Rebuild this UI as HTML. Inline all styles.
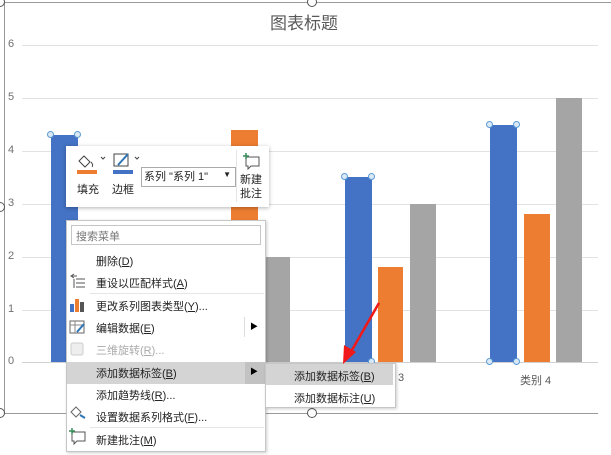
<!DOCTYPE html>
<html><head><meta charset="utf-8"><style>
*{margin:0;padding:0;box-sizing:border-box}
body{width:611px;height:455px;background:#fff;position:relative;overflow:hidden;font-family:"Liberation Sans","Noto Sans CJK SC",sans-serif}
.a{position:absolute}
.g{position:absolute;left:22px;width:576px;height:1px;background:#e2e2e2}
.yl{position:absolute;left:8px;font-size:11px;color:#707070}
.b{position:absolute;background:#4472c4}.o{position:absolute;background:#ed7d31}.y{position:absolute;background:#a5a5a5}
.h{position:absolute;width:7px;height:7px;border:1px solid #5b9bd5;background:#dbe9f7;border-radius:50%}
.H{position:absolute;width:10px;height:10px;border:1.5px solid #555;background:#fff;border-radius:50%}
.mi{position:absolute;left:96px;font-size:11px;color:#222;line-height:14px}
.sep{position:absolute;left:90px;width:174px;height:1px;background:#e6e6e6}
</style></head><body>
<div class="a" style="left:0;top:2px;width:611px;height:1px;background:#999"></div>
<div class="a" style="left:4px;top:2px;width:1px;height:412px;background:#999"></div>
<div class="a" style="left:0;top:413px;width:598px;height:1px;background:#999"></div>
<div class="a" style="left:270px;top:9px;font-size:17px;color:#595959">图表标题</div>
<div class="g" style="top:45px"></div><div class="g" style="top:98px"></div><div class="g" style="top:151px"></div><div class="g" style="top:204px"></div><div class="g" style="top:257px"></div><div class="g" style="top:310px"></div><div class="g" style="top:362px;background:#d0d0d0"></div>
<div class="yl" style="top:38px">6</div><div class="yl" style="top:91px">5</div><div class="yl" style="top:144px">4</div><div class="yl" style="top:197px">3</div><div class="yl" style="top:250px">2</div><div class="yl" style="top:303px">1</div><div class="yl" style="top:355px">0</div>
<div class="b" style="left:51px;top:135px;width:27px;height:227px"></div>
<div class="o" style="left:231px;top:130px;width:27px;height:232px"></div>
<div class="y" style="left:265px;top:257px;width:25px;height:105px"></div>
<div class="b" style="left:345px;top:177px;width:27px;height:185px"></div>
<div class="o" style="left:378px;top:267px;width:25px;height:95px"></div>
<div class="y" style="left:410px;top:204px;width:26px;height:158px"></div>
<div class="b" style="left:490px;top:125px;width:27px;height:237px"></div>
<div class="o" style="left:524px;top:214px;width:26px;height:148px"></div>
<div class="y" style="left:556px;top:98px;width:26px;height:264px"></div>
<div class="h" style="left:47px;top:131px"></div><div class="h" style="left:74px;top:131px"></div>
<div class="h" style="left:341px;top:173px"></div><div class="h" style="left:368px;top:173px"></div><div class="h" style="left:368px;top:358px"></div>
<div class="h" style="left:486px;top:121px"></div><div class="h" style="left:513px;top:121px"></div><div class="h" style="left:486px;top:358px"></div><div class="h" style="left:513px;top:358px"></div>
<div class="a" style="left:398px;top:372px;font-size:11px;color:#595959">3</div>
<div class="a" style="left:520px;top:372px;font-size:11px;color:#595959">类别 4</div>
<div class="H" style="left:-5px;top:-3px"></div><div class="H" style="left:307px;top:-3px"></div><div class="H" style="left:-5px;top:202px"></div><div class="H" style="left:-5px;top:408px"></div><div class="H" style="left:307px;top:408px"></div>
<!-- mini toolbar -->
<div class="a" style="left:66px;top:146px;width:203px;height:61px;background:#fff;box-shadow:0 1px 4px rgba(0,0,0,.3)"></div>
<svg class="a" style="left:76px;top:152px" width="66" height="26"><path d="M8 4l6 6-5 5-6-6z" fill="none" stroke="#444"/><path d="M15 10c2 2 2 4 1 5" stroke="#444" fill="none"/><rect x="1" y="18" width="20" height="4" fill="#ed7d31"/><path d="M25 5l2 2 2-2" stroke="#444" fill="none"/><rect x="38" y="2" width="14" height="12" fill="none" stroke="#444"/><path d="M42 13l10-11" stroke="#2e75b6" stroke-width="2"/><rect x="37" y="18" width="20" height="4" fill="#4472c4"/><path d="M59 5l2 2 2-2" stroke="#444" fill="none"/></svg>
<div class="a" style="left:77px;top:181px;font-size:11px;color:#222">填充</div>
<div class="a" style="left:112px;top:181px;font-size:11px;color:#222">边框</div>
<div class="a" style="left:141px;top:167px;width:95px;height:20px;border:1px solid #aaa;font-size:11px;color:#222;padding:2px 2px;line-height:14px">系列 "系列 1"<span style="position:absolute;right:4px;top:0;font-size:8px">▼</span></div>
<div class="a" style="left:236px;top:150px;width:1px;height:52px;background:#e6e6e6"></div>
<svg class="a" style="left:242px;top:153px" width="20" height="18"><path d="M4 4h13v9H9l-3 3v-3H4z" fill="none" stroke="#555"/><path d="M4 0v6M1 3h6" stroke="#3a8f5c" stroke-width="1.5"/></svg>
<div class="a" style="left:240px;top:173px;font-size:11px;color:#222;line-height:14px">新建<br>批注</div>
<!-- context menu -->
<div class="a" style="left:66px;top:220px;width:200px;height:232px;background:#fff;border:1px solid #c6c6c6;box-shadow:1px 1px 3px rgba(0,0,0,.2)"></div>
<div class="a" style="left:71px;top:225px;width:190px;height:20px;border:1px solid #c6c6c6;font-size:11px;color:#777;padding:2px 4px">搜索菜单</div>
<div class="mi" style="top:255px">删除(<u>D</u>)</div>
<div class="mi" style="top:277px">重设以匹配样式(<u>A</u>)</div>
<div class="sep" style="top:293px"></div>
<div class="mi" style="top:300px">更改系列图表类型(<u>Y</u>)...</div>
<div class="mi" style="top:322px">编辑数据(<u>E</u>)</div>
<div class="mi" style="top:344px;color:#aaa">三维旋转(<u>R</u>)...</div>
<div class="a" style="left:67px;top:362px;width:198px;height:22px;background:#d4d4d4"></div>
<div class="a" style="left:245px;top:362px;width:20px;height:22px;background:#c2c2c2"></div>
<div class="mi" style="top:367px">添加数据标签(<u>B</u>)</div>
<div class="mi" style="top:389px">添加趋势线(<u>R</u>)...</div>
<div class="mi" style="top:411px">设置数据系列格式(<u>F</u>)...</div>
<div class="sep" style="top:427px"></div>
<div class="mi" style="top:434px">新建批注(<u>M</u>)</div>
<div class="a" style="left:250px;top:321px;font-size:8px">▶</div>
<div class="a" style="left:244px;top:317px;width:1px;height:20px;background:#ddd"></div>
<div class="a" style="left:250px;top:366px;font-size:8px">▶</div>
<svg class="a" style="left:68px;top:272px" width="22" height="175">
<path d="M4 4h5M6 2l-3 2 3 2M8 7h9M8 11h9M8 15h9M6 7v9" stroke="#555" fill="none"/>
<rect x="2" y="32" width="4" height="8" fill="#4472c4"/><rect x="7" y="27" width="4" height="13" fill="#ed7d31"/><rect x="12" y="30" width="4" height="10" fill="#555"/>
<rect x="2" y="49" width="14" height="12" fill="none" stroke="#666"/><path d="M2 53h14M7 49v12" stroke="#888"/><path d="M9 60l7-8" stroke="#2e75b6" stroke-width="2"/>
<rect x="3" y="71" width="12" height="12" rx="2" fill="#eee" stroke="#ccc"/>
<path d="M3 140l5-5 5 5-5 5z" fill="none" stroke="#666"/><path d="M12 143l5 3" stroke="#2e75b6" stroke-width="2"/>
<path d="M4 160h13v9H9l-3 3v-3H4z" fill="none" stroke="#555"/><path d="M4 156v6M1 159h6" stroke="#3a8f5c" stroke-width="1.5"/>
</svg>
<!-- submenu -->
<div class="a" style="left:265px;top:363px;width:131px;height:45px;background:#fff;border:1px solid #c6c6c6;box-shadow:1px 1px 3px rgba(0,0,0,.2)"></div>
<div class="a" style="left:266px;top:364px;width:127px;height:21px;background:#d4d4d4"></div>
<div class="a" style="left:294px;top:368px;font-size:11px;color:#222">添加数据标签(<u>B</u>)</div>
<div class="a" style="left:294px;top:390px;font-size:11px;color:#222">添加数据标注(<u>U</u>)</div>
<svg class="a" style="left:0;top:0" width="611" height="455"><path d="M379 303L352 350" stroke="#f01818" stroke-width="2.5"/><path d="M343 364l1-19 12 7z" fill="#f01818"/></svg>
</body></html>
